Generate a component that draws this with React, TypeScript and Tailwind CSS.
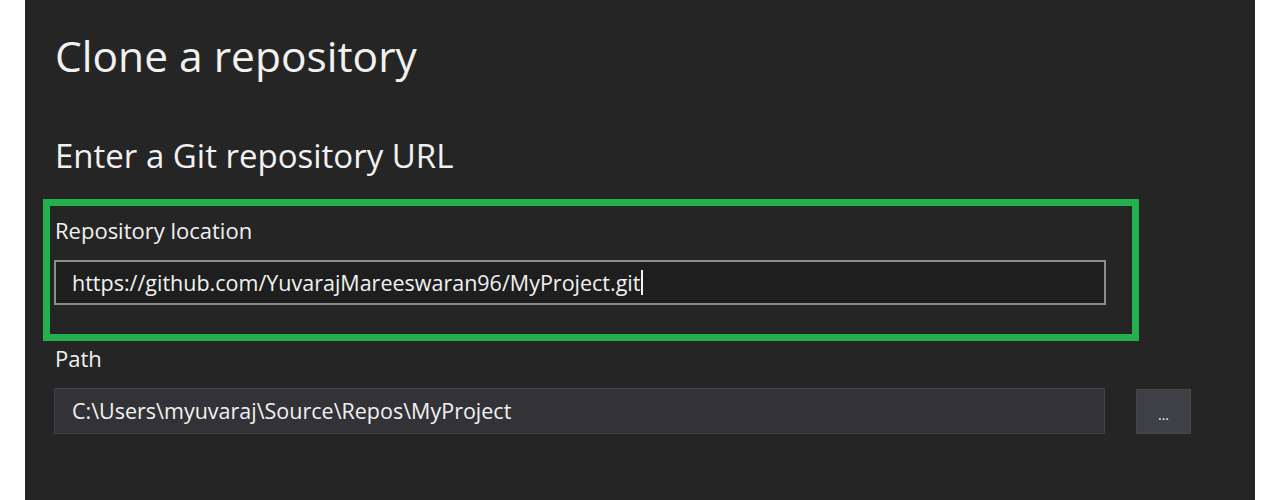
export default function App() {
  return (
    <div
      className="h-[500px] w-full bg-white px-[25px]"
      style={{ fontFamily: '"Open Sans", "Noto Sans", sans-serif' }}
    >
      <div className="flex h-full flex-col bg-[#252526] pl-[18px] pt-[28px] text-[#f1f1f1]">
        <h1 className="pl-[12px] text-[42.5px] leading-[56px] font-normal">Clone a repository</h1>
        <h2 className="mt-[50px] pl-[12px] text-[33px] leading-[44px] font-normal">
          Enter a Git repository URL
        </h2>

        <div className="mt-[21px] flex w-[1096px] flex-col border-[7px] border-[#22b14c] pb-[29px] pl-[4px] pt-[9px]">
          <label className="pl-[1px] text-[22px] leading-[30px]">Repository location</label>
          <div className="mt-[15px] flex h-[45px] w-[1052px] items-center border-2 border-[#8c8c8c] bg-[#1e1e1e] pl-[16px]">
            <span className="text-[21.5px] leading-[30px]">
              https://github.com/YuvarajMareeswaran96/MyProject.git
            </span>
            <span className="ml-[1px] h-[25px] w-[2px] bg-[#f1f1f1]" />
          </div>
        </div>

        <label className="mt-[2px] pl-[12px] text-[22px] leading-[30px]">Path</label>
        <div className="mt-[15px] flex items-center pl-[11px]">
          <div className="flex h-[46px] w-[1051px] items-center border border-[#434346] bg-[#333337] pl-[17px]">
            <span className="text-[21.5px] leading-[30px]">C:\Users\myuvaraj\Source\Repos\MyProject</span>
          </div>
          <button className="ml-[31px] flex h-[45px] w-[55px] items-center justify-center border border-[#46464a] bg-[#3f3f46] pt-[8px] text-[14px] leading-none text-[#f1f1f1]">
            ...
          </button>
        </div>
      </div>
    </div>
  );
}
